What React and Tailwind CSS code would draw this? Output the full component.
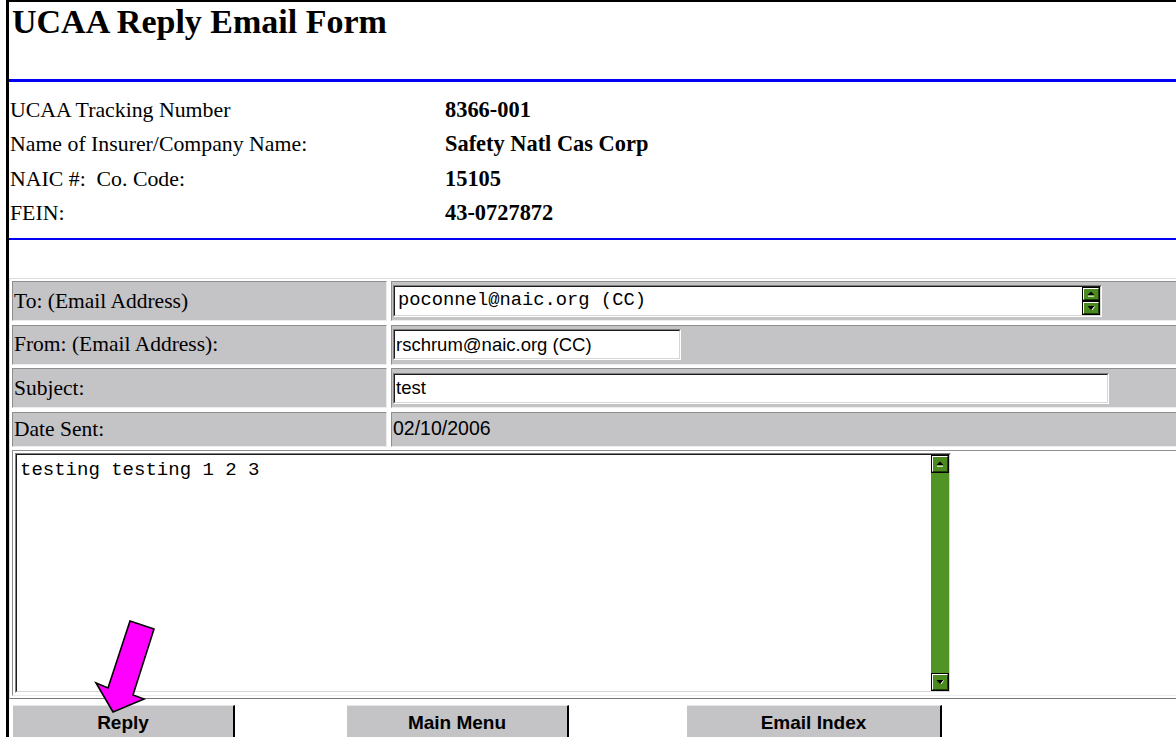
const serif = "font-['Liberation_Serif','Times_New_Roman',serif]"
const sans = "font-['Liberation_Sans',Arial,sans-serif]"
const mono = "font-['Liberation_Mono','Courier_New',monospace]"

const company = [
  ["UCAA Tracking Number", "8366-001"],
  ["Name of Insurer/Company Name:", "Safety Natl Cas Corp"],
  ["NAIC #:  Co. Code:", "15105"],
  ["FEIN:", "43-0727872"],
]

// sunken 2px field border, old Windows style
function Inset({ className, children }) {
  return (
    <div className={`border border-t-[#808080] border-l-[#808080] border-b-white border-r-white ${className}`}>
      <div className="flex h-full w-full border border-t-[#1c1c1c] border-l-[#1c1c1c] border-b-[#d6d6d6] border-r-[#d6d6d6] bg-white">
        {children}
      </div>
    </div>
  )
}

function Arrow({ up, className }) {
  return (
    <div className={`border border-black bg-black ${className}`}>
      <div className="flex h-full w-full items-center justify-center border border-t-white border-l-white border-b-[#1e3d0a] border-r-[#1e3d0a] bg-[#4b8a1f]">
        <svg width="8" height="6" viewBox="0 0 8 6">
          {up ? (
            <>
              <path d="M4 0.5 L7.5 4 L0.5 4 Z" fill="black" />
              <path d="M1 5.2 H7" stroke="white" strokeWidth="1" />
            </>
          ) : (
            <>
              <path d="M0.5 1 H7.5 L4 5 Z" fill="black" />
              <path d="M5 5 L7.5 1.5" stroke="white" strokeWidth="1" />
            </>
          )}
        </svg>
      </div>
    </div>
  )
}

function Cell({ className, children }) {
  return (
    <div className={`flex items-center border border-t-[#8e8e8e] border-l-[#8e8e8e] border-b-[#ededed] border-r-[#ededed] ${className}`}>
      {children}
    </div>
  )
}

function FormRow({ label, height, children }) {
  return (
    <div className={`flex gap-[4px] ${height}`}>
      <Cell className="w-[375px] bg-[#c4c3c6] pl-[1px]">
        <span className={`${serif} text-[21.5px] text-black`}>{label}</span>
      </Cell>
      <Cell className="flex-1 bg-[#c4c3c6] pl-[1px]">{children}</Cell>
    </div>
  )
}

function NavButton({ label, className }) {
  return (
    <button
      className={`flex h-[34px] items-center justify-center border-t border-t-[#e6e6e6] border-r-2 border-r-black bg-[#c4c3c6] pt-[2px] ${sans} text-[19px] font-bold text-black ${className}`}
    >
      {label}
    </button>
  )
}

export default function App() {
  return (
    <div className="relative h-[737px] w-[1176px] overflow-hidden bg-white pl-[6px]">
      <div className="h-full border-t-2 border-l-[3px] border-black">
        <h1 className={`${serif} pl-[3px] text-[34px] font-bold leading-[39px] text-black`}>
          UCAA Reply Email Form
        </h1>

        <div className="mt-[38px] h-[2.5px] bg-[#0000f4]" />

        {/* company details */}
        <div className="pt-[11px]">
          {company.map(([label, value]) => (
            <div key={label} className="grid grid-cols-[436px_1fr] leading-[34.5px]">
              <span className={`${serif} whitespace-pre pl-[1px] text-[21.8px] text-black`}>{label}</span>
              <span className={`${serif} text-[22.4px] font-bold text-black`}>{value}</span>
            </div>
          ))}
        </div>

        <div className="mt-[7px] h-[2.5px] bg-[#0000f4]" />

        {/* email fields */}
        <div className="mt-[38px] flex w-[1250px] flex-col gap-[3.5px] border border-t-[#dcdcdc] border-l-[#dcdcdc] border-b-[#7a7a7a] border-r-[#7a7a7a] p-[2px]">
          <FormRow label="To: (Email Address)" height="h-[40px]">
            <Inset className="h-[32px] w-[709px]">
              <div className={`${mono} flex-1 pl-[3px] pt-[2px] text-[18.8px] leading-[22px] text-black`}>
                poconnel@naic.org (CC)
              </div>
              <div className="flex w-[18px] flex-col">
                <Arrow up className="h-[14px] w-[18px]" />
                <Arrow className="h-[14px] w-[18px]" />
              </div>
            </Inset>
          </FormRow>

          <FormRow label="From: (Email Address):" height="h-[40px]">
            <Inset className="h-[31px] w-[288px]">
              <div className={`${sans} flex items-center pl-[1px] text-[18.5px] text-black`}>rschrum@naic.org (CC)</div>
            </Inset>
          </FormRow>

          <FormRow label="Subject:" height="h-[40px]">
            <Inset className="h-[31px] w-[716px]">
              <div className={`${sans} flex items-center pl-[1px] text-[18.5px] text-black`}>test</div>
            </Inset>
          </FormRow>

          <FormRow label="Date Sent:" height="h-[35px]">
            <span className={`${sans} text-[19.5px] text-black`}>02/10/2006</span>
          </FormRow>

          {/* message body */}
          <Cell className="bg-white p-[2px]">
            <Inset className="h-[240px] w-[936px]">
              <div className={`${mono} flex-1 pl-[3px] pt-[4px] text-[19px] leading-[22px] text-black`}>
                testing testing 1 2 3
              </div>
              <div className="flex w-[18px] flex-col justify-between bg-[#509425]">
                <Arrow up className="h-[18px] w-[18px]" />
                <Arrow className="h-[18px] w-[18px]" />
              </div>
            </Inset>
          </Cell>
        </div>

        <div className="mt-[6px] flex">
          <NavButton label="Reply" className="ml-[4px] w-[222px]" />
          <NavButton label="Main Menu" className="ml-[112px] w-[222px]" />
          <NavButton label="Email Index" className="ml-[118px] w-[255px]" />
        </div>
      </div>

      {/* pointer arrow */}
      <svg className="pointer-events-none absolute left-0 top-0" width="1176" height="737" viewBox="0 0 1176 737">
        <polygon
          points="130,621 154,629 133,695 144,699 113,712 96,683 108,688"
          fill="#ff00ff"
          stroke="black"
          strokeWidth="1.6"
          strokeLinejoin="miter"
        />
      </svg>
    </div>
  )
}
